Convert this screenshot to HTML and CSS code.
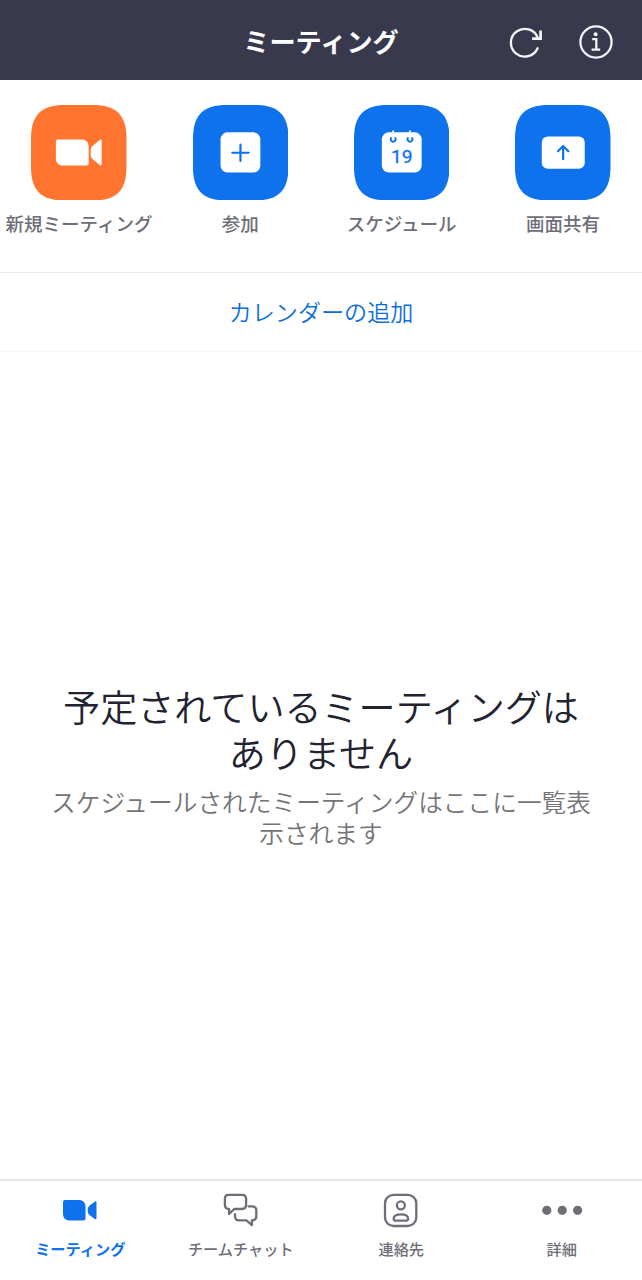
FILE: index.html
```html
<!DOCTYPE html>
<html lang="ja">
<head>
<meta charset="utf-8">
<title>ミーティング</title>
<link rel="stylesheet" href="styles.css">
</head>
<body>
<div class="app">
  <header class="topbar">
    <h1 class="topbar-title">ミーティング</h1>
    <div class="topbar-actions">
      <svg class="icon-refresh" width="36" height="36" viewBox="0 0 36 36"><path d="M29.6 24.2A13.9 13.9 0 1 1 29.8 13.8"/><path class="head" d="M32.6 6.6V14.7H24.1"/></svg>
      <svg class="icon-info" width="36" height="36" viewBox="0 0 36 36"><circle cx="18" cy="18" r="15.6"/><circle class="dot" cx="17.6" cy="10.2" r="2"/><path d="M14.2 15.2H18.3V25.4M13.6 25.6H22.2"/></svg>
    </div>
  </header>

  <section class="actions">
    <a class="action">
      <svg class="tile tile-orange" viewBox="0 0 96 96"><path class="bg" d="M34 0H62C86 0 96 10 96 34V62C96 86 86 96 62 96H34C10 96 0 86 0 62V34C0 10 10 0 34 0Z"/><path class="fg" d="M27 34.7H51C55.4 34.7 58 37.6 58 42V58.9Q58 60.9 56 60.9H32.3C27.6 60.9 25 58 25 53.6V36.7Q25 34.7 27 34.7ZM71 35.8V59.8C71 61.1 70 61.2 69 60.4L61.8 54.4Q60 52.8 60 50.4V45.2Q60 42.8 61.8 41.2L69 35.2C70 34.4 71 34.5 71 35.8Z"/></svg>
      <span class="action-label">新規ミーティング</span>
    </a>
    <a class="action">
      <svg class="tile" viewBox="0 0 96 96"><path class="bg" d="M34 0H62C86 0 96 10 96 34V62C96 86 86 96 62 96H34C10 96 0 86 0 62V34C0 10 10 0 34 0Z"/><rect class="fg" x="27.7" y="27.5" width="40" height="40.3" rx="7"/><path class="cut" d="M47.7 39.8V56.2M39.5 48H55.9"/></svg>
      <span class="action-label">参加</span>
    </a>
    <a class="action">
      <svg class="tile" viewBox="0 0 96 96"><path class="bg" d="M34 0H62C86 0 96 10 96 34V62C96 86 86 96 62 96H34C10 96 0 86 0 62V34C0 10 10 0 34 0Z"/><rect class="fg" x="28" y="27.5" width="40" height="40.3" rx="7"/><path class="ring" d="M37.2 33.2A2.5 2.5 0 1 0 41.6 33.2M54.1 33.2A2.5 2.5 0 1 0 58.5 33.2"/><path class="peg" d="M39.4 26.2V34M56.3 26.2V34"/><text class="date" x="48" y="58.7" text-anchor="middle">19</text></svg>
      <span class="action-label">スケジュール</span>
    </a>
    <a class="action">
      <svg class="tile" viewBox="0 0 96 96"><path class="bg" d="M34 0H62C86 0 96 10 96 34V62C96 86 86 96 62 96H34C10 96 0 86 0 62V34C0 10 10 0 34 0Z"/><rect class="fg" x="26.9" y="31.7" width="43.2" height="32.5" rx="6"/><path class="cut" d="M48.4 54.5V41.2M43.2 46.4L48.4 41.2L53.6 46.4"/></svg>
      <span class="action-label">画面共有</span>
    </a>
  </section>

  <a class="calendar-link">カレンダーの追加</a>

  <main class="empty">
    <h2 class="empty-title">予定されているミーティングは<br>ありません</h2>
    <p class="empty-text">スケジュールされたミーティングはここに一覧表<br>示されます</p>
  </main>

  <nav class="tabs">
    <a class="tab tab-active">
      <svg width="44" height="40" viewBox="0 0 44 40"><path class="solid" d="M7 10H20.5C25 10 27.5 12.5 27.5 17V28.6Q27.5 30.6 25.5 30.6H12C7.5 30.6 5 28 5 23.6V12Q5 10 7 10ZM38.5 12.3V28.3C38.5 29.4 37.6 29.5 36.7 28.9L31.7 25.2Q29.7 23.7 29.7 21.6V19Q29.7 16.9 31.7 15.4L36.7 11.7C37.6 11.1 38.5 11.2 38.5 12.3Z"/></svg>
      <span class="tab-label">ミーティング</span>
    </a>
    <a class="tab">
      <svg width="44" height="40" viewBox="0.9 0 44 40"><path class="line" d="M10 4.8H23.8Q28 4.8 28 8.8V14.8Q28 19 23.8 19H16.1L11 24V19.1Q6.8 19 6.8 14.8V8.8Q6.8 4.8 10 4.8Z"/><path class="line" d="M30.5 16.3H33.8Q38.2 16.3 38.2 20.4V26Q38.2 30.4 33.8 30.4V35.2L28.3 30.4H21.2Q16.9 30.4 16.9 26V24.2"/></svg>
      <span class="tab-label">チームチャット</span>
    </a>
    <a class="tab">
      <svg width="44" height="40" viewBox="0 0 44 40"><rect class="line" x="6" y="4.8" width="31.3" height="31.2" rx="8.5"/><circle class="line" cx="21.9" cy="15.3" r="4"/><path class="line" d="M14.7 28.7C14.7 25.6 18 24.3 21.9 24.3S29.1 25.6 29.1 28.7C29.1 30.2 28.1 30.7 26.7 30.7H17.1C15.7 30.7 14.7 30.2 14.7 28.7Z"/></svg>
      <span class="tab-label">連絡先</span>
    </a>
    <a class="tab">
      <svg width="44" height="40" viewBox="0 0 44 40"><circle class="solid" cx="6.8" cy="20.3" r="4.6"/><circle class="solid" cx="22.2" cy="20.3" r="4.6"/><circle class="solid" cx="37.6" cy="20.3" r="4.6"/></svg>
      <span class="tab-label">詳細</span>
    </a>
  </nav>
</div>
</body>
</html>
```
FILE: styles.css
```css
* { box-sizing: border-box; }

body {
  margin: 0;
  background: #fff;
  font-family: "Noto Sans CJK JP", sans-serif;
  color: #6e6e78;
}

.app {
  display: flex;
  flex-direction: column;
  width: 642px;
  height: 1280px;
  overflow: hidden;
}

.topbar {
  display: grid;
  grid-template-columns: 1fr auto 1fr;
  align-items: center;
  height: 80px;
  padding: 3px 28px 0;
  background: #39394d;
  color: #fff;
}

.topbar-title {
  grid-column: 2;
  margin: 0;
  padding-bottom: 2px;
  font-size: 26.2px;
  line-height: 38px;
  font-weight: 700;
}

.topbar-actions {
  display: flex;
  justify-content: flex-end;
  gap: 34px;
}

.topbar-actions svg {
  fill: none;
  stroke: #f4f4fa;
  stroke-width: 2.3;
}

.icon-refresh { stroke-linecap: round; }
.icon-refresh .head { stroke-width: 2.7; stroke-linecap: butt; }
.icon-info .dot { fill: #f4f4fa; stroke: none; }

.actions {
  display: grid;
  grid-template-columns: repeat(4, 161.3px);
  justify-content: center;
  height: 193px;
  padding-top: 24.5px;
  border-bottom: 1px solid #ebebef;
}

.action {
  display: flex;
  flex-direction: column;
  align-items: center;
  gap: 9px;
}

.tile {
  width: 95.5px;
  height: 95.5px;
}

.action-label {
  font-size: 18.5px;
  line-height: 29px;
  font-weight: 500;
  white-space: nowrap;
}

.tile .bg { fill: #0e72ed; }
.tile-orange .bg { fill: #ff742e; }
.tile .fg { fill: #fff; }
.tile .cut { fill: none; stroke: #0e72ed; stroke-width: 2.2; stroke-linecap: round; stroke-linejoin: round; }
.tile .ring { fill: none; stroke: #0e72ed; stroke-width: 2; stroke-linecap: round; }
.tile .peg { stroke: #fff; stroke-width: 1.8; stroke-linecap: round; }
.tile .date { fill: #0e72ed; stroke: #0e72ed; stroke-width: .3; font: 400 19.3px Roboto, sans-serif; }

.calendar-link {
  height: 79px;
  border-bottom: 1px solid #f4f4f6;
  color: #0e6fd9;
  font-size: 23.1px;
  line-height: 77px;
  text-align: center;
  font-weight: 350;
}

.empty {
  display: flex;
  flex: 1;
  flex-direction: column;
  align-items: center;
  padding-top: 331px;
  text-align: center;
}

.empty-title {
  margin: 0;
  color: #222230;
  font-size: 37.1px;
  line-height: 46px;
  font-weight: 350;
}

.empty-text {
  margin: 11px 0 0;
  color: #747478;
  font-size: 24.7px;
  line-height: 31px;
  font-weight: 350;
  white-space: nowrap;
}

.tabs {
  display: grid;
  grid-template-columns: repeat(4, 1fr);
  height: 101px;
  padding-top: 9px;
  border-top: 2px solid #e6e6e8;
}

.tab {
  display: flex;
  flex-direction: column;
  align-items: center;
  gap: 7px;
}

.tab-active { color: #0e72ed; }

.tab-label {
  font-size: 15.2px;
  line-height: 22px;
  font-weight: 500;
}

.tab-active .tab-label { font-weight: 700; }
.tab .solid { fill: currentColor; }
.tab .line { fill: none; stroke: currentColor; stroke-width: 2.3; stroke-linejoin: round; stroke-linecap: round; }
```
